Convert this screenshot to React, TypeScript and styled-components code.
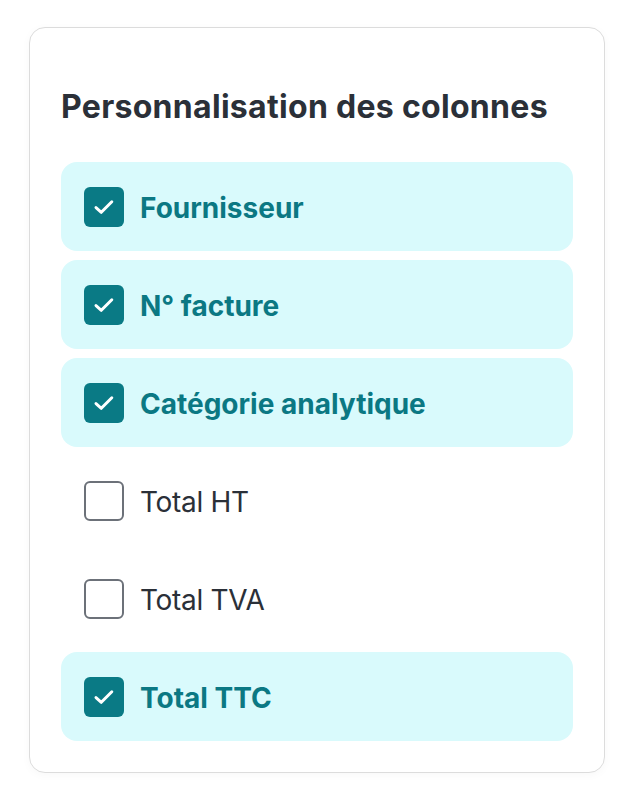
import React, { useState } from "react";
import styled, { createGlobalStyle } from "styled-components";

const GlobalStyle = createGlobalStyle`
  html, body {
    margin: 0;
    padding: 0;
    background: #ffffff;
  }
  body {
    font-family: Inter, "Noto Sans", "Liberation Sans", sans-serif;
  }
`;

const Page = styled.div`
  padding: 27px 29px;
`;

const Card = styled.div`
  width: 576px;
  box-sizing: border-box;
  background: #ffffff;
  border: 1.5px solid #dcdcdc;
  border-radius: 16px;
  box-shadow: 0 2px 10px rgba(0, 0, 0, 0.03);
  padding: 59px 31px 31px 31px;
`;

const Title = styled.h2`
  margin: 0 0 35px 0;
  font-size: 32px;
  line-height: 40px;
  font-weight: 700;
  color: #2b3038;
  letter-spacing: 0.3px;
`;

const List = styled.div`
  display: flex;
  flex-direction: column;
  gap: 9px;
`;

const Row = styled.label<{ $checked: boolean }>`
  display: flex;
  align-items: center;
  gap: 16px;
  height: 89px;
  padding: 0 23px;
  border-radius: 16px;
  background: ${(p) => (p.$checked ? "#d9fafc" : "transparent")};
  cursor: pointer;
`;

const Box = styled.span<{ $checked: boolean }>`
  flex: none;
  display: flex;
  align-items: center;
  justify-content: center;
  width: 40px;
  height: 40px;
  box-sizing: border-box;
  border-radius: 6px;
  background: ${(p) => (p.$checked ? "#0a7a85" : "#ffffff")};
  border: ${(p) => (p.$checked ? "none" : "2px solid #6c7179")};
`;

const Label = styled.span<{ $checked: boolean }>`
  font-size: 28px;
  padding-top: 2px;
  font-weight: ${(p) => (p.$checked ? 700 : 400)};
  letter-spacing: ${(p) => (p.$checked ? "0" : "-0.3px")};
  color: ${(p) => (p.$checked ? "#0b7883" : "#2b3038")};
`;

const CheckIcon = () => (
  <svg width="24" height="24" viewBox="0 0 24 24" fill="none">
    <path
      d="M4 12.6 L9.3 17.3 L19.8 6.8"
      stroke="#ffffff"
      strokeWidth="3"
      strokeLinecap="round"
      strokeLinejoin="round"
    />
  </svg>
);

const initial = [
  { id: "fournisseur", label: "Fournisseur", checked: true },
  { id: "facture", label: "N° facture", checked: true },
  { id: "categorie", label: "Catégorie analytique", checked: true },
  { id: "ht", label: "Total HT", checked: false },
  { id: "tva", label: "Total TVA", checked: false },
  { id: "ttc", label: "Total TTC", checked: true },
];

const App: React.FC = () => {
  const [cols, setCols] = useState(initial);

  const toggle = (id: string) =>
    setCols((prev) =>
      prev.map((c) => (c.id === id ? { ...c, checked: !c.checked } : c))
    );

  return (
    <Page>
      <GlobalStyle />
      <Card>
        <Title>Personnalisation des colonnes</Title>
        <List>
          {cols.map((c) => (
            <Row key={c.id} $checked={c.checked} onClick={() => toggle(c.id)}>
              <Box $checked={c.checked}>{c.checked && <CheckIcon />}</Box>
              <Label $checked={c.checked}>{c.label}</Label>
            </Row>
          ))}
        </List>
      </Card>
    </Page>
  );
};

export default App;
